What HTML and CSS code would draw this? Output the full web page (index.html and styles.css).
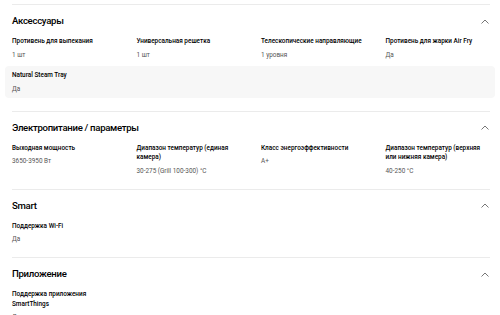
FILE: index.html
```html
<!DOCTYPE html>
<html lang="ru">
<head>
<meta charset="utf-8">
<link rel="stylesheet" href="styles.css">
</head>
<body>
<div class="specs">
  <section class="section">
    <div class="head">
      <h2 class="title">Аксессуары</h2>
      <svg class="chev" viewBox="0 0 8 5" width="8" height="5"><path d="M0.5 4.5 L4 1 L7.5 4.5" fill="none" stroke="#666" stroke-width="0.9"/></svg>
    </div>
    <div class="grid">
      <div class="item"><div class="label">Противень для выпекания</div><div class="value">1 шт</div></div>
      <div class="item"><div class="label">Универсальная решетка</div><div class="value">1 шт</div></div>
      <div class="item"><div class="label">Телескопические направляющие</div><div class="value">1 уровня</div></div>
      <div class="item"><div class="label">Противень для жарки Air Fry</div><div class="value">Да</div></div>
      <div class="row-hl">
        <div class="item"><div class="label">Natural Steam Tray</div><div class="value">Да</div></div>
      </div>
    </div>
  </section>
  <section class="section">
    <div class="head">
      <h2 class="title">Электропитание / параметры</h2>
      <svg class="chev" viewBox="0 0 8 5" width="8" height="5"><path d="M0.5 4.5 L4 1 L7.5 4.5" fill="none" stroke="#666" stroke-width="0.9"/></svg>
    </div>
    <div class="grid">
      <div class="item"><div class="label">Выходная мощность</div><div class="value">3650-3950 Вт</div></div>
      <div class="item"><div class="label">Диапазон температур (единая камера)</div><div class="value">30-275 (Grill 100-300) °C</div></div>
      <div class="item"><div class="label">Класс энергоэффективности</div><div class="value">A+</div></div>
      <div class="item"><div class="label">Диапазон температур (верхняя или нижняя камера)</div><div class="value">40-250 °C</div></div>
    </div>
  </section>
  <section class="section">
    <div class="head">
      <h2 class="title">Smart</h2>
      <svg class="chev" viewBox="0 0 8 5" width="8" height="5"><path d="M0.5 4.5 L4 1 L7.5 4.5" fill="none" stroke="#666" stroke-width="0.9"/></svg>
    </div>
    <div class="grid">
      <div class="item"><div class="label">Поддержка Wi-Fi</div><div class="value">Да</div></div>
    </div>
  </section>
  <section class="section">
    <div class="head">
      <h2 class="title">Приложение</h2>
      <svg class="chev" viewBox="0 0 8 5" width="8" height="5"><path d="M0.5 4.5 L4 1 L7.5 4.5" fill="none" stroke="#666" stroke-width="0.9"/></svg>
    </div>
    <div class="grid">
      <div class="item"><div class="label">Поддержка приложения<br>SmartThings</div><div class="value">Да</div></div>
    </div>
  </section>
</div>
</body>
</html>
```

FILE: styles.css
```css
html, body {
  margin: 0;
  padding: 0;
  background: #fff;
}
body {
  font-family: Roboto, "Liberation Sans", sans-serif;
  color: #000;
  overflow: hidden;
}
.specs {
  padding: 4px 10px 0 12px;
}
.section {
  border-top: 1px solid #ebebeb;
  padding-bottom: 13px;
}
.head {
  height: 32px;
  display: flex;
  align-items: center;
  justify-content: space-between;
}
.title {
  margin: 0;
  font-size: 9.6px;
  font-weight: 500;
  line-height: 14px;
  letter-spacing: -0.3px;
}
.chev {
  display: block;
  margin-right: 1px;
}
.grid {
  display: grid;
  grid-template-columns: repeat(4, 1fr);
  column-gap: 20px;
  row-gap: 6.5px;
}
.row-hl {
  grid-column: 1 / -1;
  display: grid;
  grid-template-columns: repeat(4, 1fr);
  column-gap: 20px;
  background: #f7f7f7;
  border-radius: 4px;
  margin: 0 -5px 0 -7px;
  padding: 5px 5px 4px 7px;
}
.label {
  font-size: 6.4px;
  font-weight: 500;
  line-height: 9.5px;
  color: #000;
}
.value {
  margin-top: 3px;
  font-size: 6.4px;
  line-height: 10px;
  color: #555;
}
```
